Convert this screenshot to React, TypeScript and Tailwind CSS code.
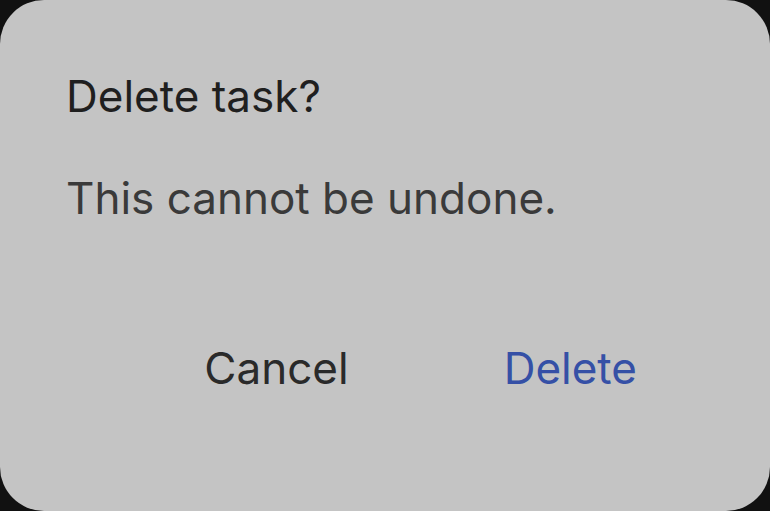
export default function App() {
  return (
    <div className="w-[770px] h-[511px] bg-[#111111]" style={{ fontFamily: 'Inter, "Noto Sans", sans-serif' }}>
      <div className="w-full h-full rounded-[44px] bg-[#c4c4c4] flex flex-col pl-[66px] pt-[70px]">
        <h1 className="text-[44px] leading-[52px] text-[#1f1f1f] font-normal">Delete task?</h1>
        <p className="mt-[50px] text-[44px] leading-[52px] text-[#3a3a3a]">This cannot be undone.</p>
        <div className="mt-[118px] flex justify-end pr-[133px] gap-[155px] text-[44px] leading-[52px]">
          <button className="text-[#2a2a2a]">Cancel</button>
          <button className="text-[#3550a6]">Delete</button>
        </div>
      </div>
    </div>
  );
}
